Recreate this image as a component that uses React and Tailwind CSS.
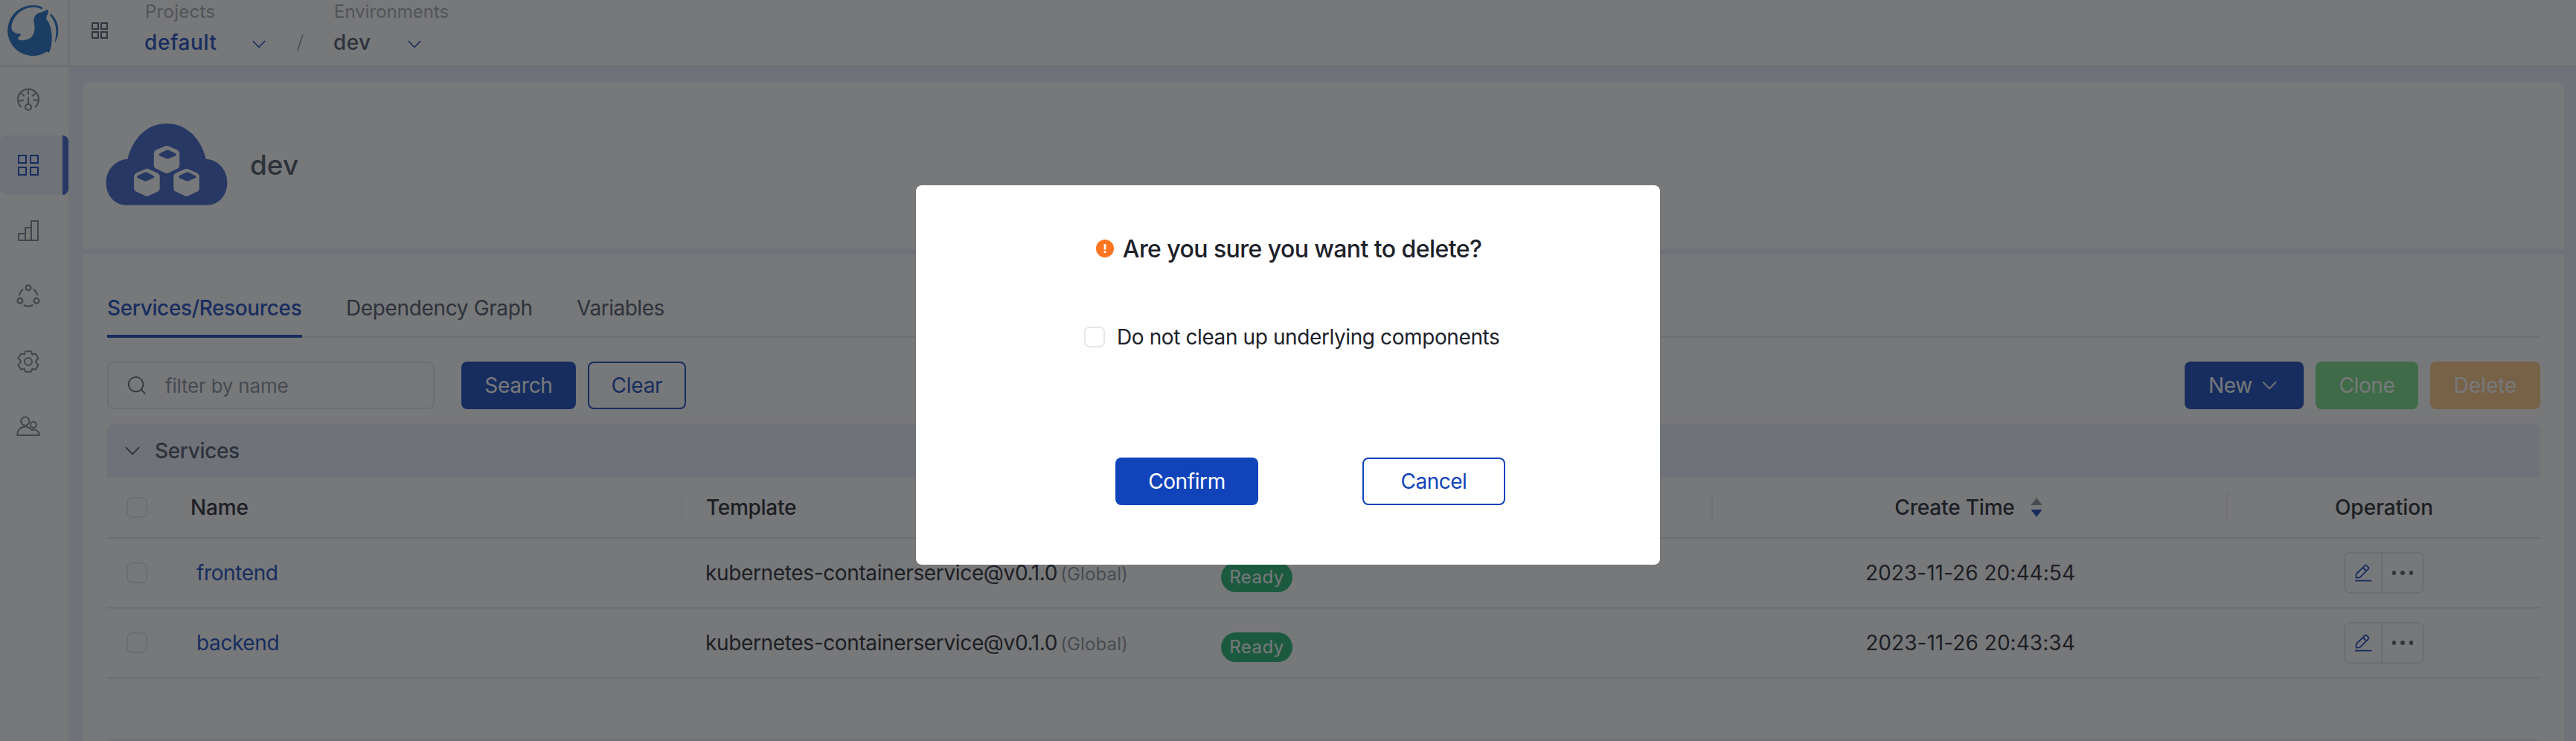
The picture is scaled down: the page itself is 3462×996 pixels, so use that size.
const SIDEBAR_ICONS = {
  dashboard: (
    <>
      <path d="M6.8 26.2A14 14 0 1 1 25.2 26.2" />
      <path d="M16 2.5V9M6.5 7.2l4.2 4.2M25.5 7.2l-4.2 4.2M3 18.4l7-1.9M22.5 16.5H30M16 12.5V22" />
      <circle cx="16" cy="26" r="4" />
    </>
  ),
  apps: (
    <g strokeWidth="2">
      <rect x="3" y="3" width="10" height="10" />
      <rect x="19" y="3" width="10" height="10" />
      <rect x="3" y="19" width="10" height="10" />
      <rect x="19" y="19" width="10" height="10" />
    </g>
  ),
  chart: (
    <path d="M3 29V20H12M12 29V12H20M20 29V3H29V29H3Z" strokeLinejoin="round" />
  ),
  share: (
    <g>
      <circle cx="16" cy="4.8" r="3.4" strokeWidth="2.2" />
      <circle cx="5" cy="22.3" r="3.4" strokeWidth="2.2" />
      <circle cx="27" cy="22.3" r="3.4" strokeWidth="2.2" />
      <path d="M3.6 15.2C4.6 11.6 6.2 9 9 6.8M28.6 15.2C27.6 11.6 25.8 9 23 6.8M9.8 28C13.6 30 18.4 30 22.2 28" />
    </g>
  ),
  settings: (
    <>
      <path
        strokeLinejoin="round"
        d="M12 2.2H20L21.2 6.4L25.8 5.4L29.6 11.8L26.6 14.4Q25.6 16 26.6 17.6L29.6 20.4L25.8 26.8L21.2 25.8L20 29.8H12L10.8 25.8L6.2 26.8L2.4 20.4L5.4 17.6Q6.4 16 5.4 14.4L2.4 11.6L6.2 5.4L10.8 6.4Z"
      />
      <circle cx="16" cy="16" r="5" />
    </>
  ),
  users: (
    <>
      <circle cx="11.8" cy="8.2" r="5.6" />
      <circle cx="23" cy="13" r="4" />
      <path
        strokeLinejoin="round"
        d="M1.2 27C1.2 20 6 15.6 11.8 15.6C15.4 15.6 18.4 17.2 20.4 20C25.6 18 30.8 21.6 30.8 27Z"
      />
    </>
  ),
};

const SIDEBAR = ["dashboard", "apps", "chart", "share", "settings", "users"];

function Logo() {
  return (
    <svg viewBox="0 0 288 288" className="size-24 shrink-0" fill="#196cc6">
      <path d="M172 29C158 23 146 21 132 21A102 102 0 1 0 189 208L196 213Q200 208 202 202C206 190 210 172 209 146C208 118 200 92 186 76C186 66 195 56 195 46Q193 38 188 39C178 46 170 49 160 51C143 57 136 68 136 84C138 94 141 104 139 121C136 140 130 154 108 160C94 164 82 163 73 158C70 154 74 150 80 146Q84 142 84 136C70 137 56 133 48 121C44 108 47 96 53 84C64 57 90 34 126 30C144 28 158 32 169 39Z" />
      <path d="M205 55C226 74 235 98 235 122C235 142 230 158 221 173C223 158 226 142 226 122C225 99 217 78 201 62Z" />
    </svg>
  );
}

function CloudIcon() {
  const cube =
    "M274 139Q282 135 290 139L325 154Q334 159 334 167V217Q334 225 326 229L290 246Q282 251 274 246L238 229Q230 225 230 217V167Q230 159 239 154Z";
  const face =
    "M280 155Q286 152 292 155L319 169Q324 173 319 177L294 188Q286 192 278 188L254 178Q248 173 254 168Z";
  return (
    <svg viewBox="36 47 492 331" className="mb-0.5 h-[110px] w-[164px] shrink-0">
      <path
        fill="#365fc5"
        d="M118 377C70 377 37 335 37 287C37 235 75 194 124 191C145 105 205 47 281 47C360 47 420 105 441 191C490 194 527 235 527 287C527 335 494 377 446 377Z"
      />
      <path fill="#fff" d={cube} />
      <path fill="#365fc5" d={face} />
      <g transform="translate(-80 93)">
        <path fill="#fff" d={cube} />
        <path fill="#365fc5" transform="translate(-9 -3)" d={face} />
      </g>
      <g transform="translate(80 93)">
        <path fill="#fff" d={cube} />
        <path fill="#365fc5" transform="translate(0 -3)" d={face} />
      </g>
    </svg>
  );
}

function Chevron({ className }) {
  return (
    <svg viewBox="0 0 20 12" className={className} fill="none" stroke="currentColor" strokeWidth="1.8">
      <path d="M1 1.2L10 10.4L19 1.2" />
    </svg>
  );
}

function Checkbox() {
  return <span className="block size-7 shrink-0 rounded-[7px] border-2 border-[#e5e6eb] bg-white" />;
}

function Sidebar() {
  return (
    <aside className="flex w-[94px] shrink-0 flex-col">
      <div className="h-[90px] overflow-hidden border-r-2 border-b-2 border-[#e5e6eb] bg-white">
        <Logo />
      </div>
      <nav className="mr-0.5 flex flex-1 flex-col gap-2 bg-white pt-1">
        {SIDEBAR.map((name) => (
          <div
            key={name}
            className={
              name === "apps"
                ? "flex h-20 items-center rounded-[8px] border-r-8 border-[#365fc5] bg-[#ecf0fb] pl-[22px] text-[#1144bb]"
                : "flex h-20 items-center pl-[22px] text-[#748290]"
            }
          >
            <svg viewBox="0 0 32 32" className="size-8" fill="none" stroke="currentColor" strokeWidth="2">
              {SIDEBAR_ICONS[name]}
            </svg>
          </div>
        ))}
      </nav>
    </aside>
  );
}

function Header() {
  return (
    <header className="flex h-[90px] items-start border-b-2 border-[#e5e6eb] bg-white">
      <svg
        viewBox="0 0 24 24"
        className="mt-[29px] ml-7 size-6 text-[#4e5969]"
        fill="none"
        stroke="currentColor"
        strokeWidth="2"
      >
        <rect x="2" y="2" width="8" height="8" />
        <rect x="14" y="2" width="8" height="8" />
        <rect x="2" y="14" width="8" height="8" />
        <rect x="14" y="14" width="8" height="8" />
      </svg>
      <div className="ml-12 w-[204px]">
        <div className="pl-[1px] text-2xl leading-[32px] tracking-[0.29px] text-[#a0a6b0]">Projects</div>
        <div className="flex h-[50px] items-center text-[#1144bb]">
          <span className="w-[145px] text-[28px] font-medium tracking-[0.57px]">default</span>
          <Chevron className="mt-1 h-[11px] w-[18px]" />
        </div>
      </div>
      <div className="flex h-[82px] w-[50px] items-end text-[#8a94a0]">
        <svg viewBox="0 0 10 24" className="mb-3 h-6 w-2.5" fill="none" stroke="currentColor" strokeWidth="1.6">
          <path d="M9 0.5L1.5 23" />
        </svg>
      </div>
      <div>
        <div className="pl-[1px] text-2xl leading-[32px] text-[#a0a6b0]">Environments</div>
        <div className="flex h-[50px] items-center">
          <span className="w-[100px] text-[28px] font-medium tracking-[0.39px] text-[#465262]">dev</span>
          <Chevron className="mt-1 h-[11px] w-[18px] text-[#1144bb]" />
        </div>
      </div>
    </header>
  );
}

function Tabs() {
  return (
    <div className="flex h-20 gap-[59px] border-b-2 border-[#e5e6eb] text-[28px] text-[#465262]">
      <div className="flex h-20 w-[262px] items-center border-y-4 border-t-transparent border-b-[#1144bb] font-medium tracking-[-0.37px] whitespace-nowrap text-[#1144bb]">
        Services/Resources
      </div>
      <div className="flex h-20 w-[251px] items-center tracking-[-0.36px] whitespace-nowrap">Dependency Graph</div>
      <div className="flex h-20 items-center tracking-[-0.48px]">Variables</div>
    </div>
  );
}

function Toolbar() {
  return (
    <div className="mt-8 flex h-16 text-[28px]">
      <div className="flex w-[440px] items-center rounded-[8px] border-2 border-[#e5e6eb] pl-[26px]">
        <svg
          viewBox="0 0 24 24"
          className="size-6 text-[#4e5969]"
          fill="none"
          stroke="currentColor"
          strokeWidth="1.7"
        >
          <circle cx="10.6" cy="10.6" r="9.8" />
          <path d="M17.8 17.8L23.4 23.4" />
        </svg>
        <span className="mt-px ml-[26px] text-[26px] tracking-[-0.21px] text-[#86909c]">filter by name</span>
      </div>
      <div className="ml-9 flex w-[154px] items-center justify-center rounded-[8px] bg-[#1144bb] tracking-[-0.27px] text-white">
        Search
      </div>
      <div className="ml-4 flex w-[132px] items-center justify-center rounded-[8px] border-2 border-[#1144bb] tracking-[-0.26px] text-[#1144bb]">
        Clear
      </div>
      <div className="ml-auto flex w-40 items-center rounded-[8px] bg-[#1144bb] pl-8 tracking-[-0.36px] text-white">
        <span className="w-[72px]">New</span>
        <Chevron className="h-3 w-5" />
      </div>
      <div className="ml-4 flex w-[138px] items-center justify-center rounded-[8px] bg-[#74df82] tracking-[-0.39px] text-white">
        Clone
      </div>
      <div className="ml-4 flex w-[148px] items-center justify-center rounded-[8px] bg-[#ffc67f] text-white">
        Delete
      </div>
    </div>
  );
}

function GroupBar({ title }) {
  return (
    <div className="flex h-[72px] shrink-0 items-center gap-5 rounded-t-[8px] bg-[#ecf0fb] pl-6 text-[28px] text-[#465262]">
      <Chevron className="h-3 w-5" />
      <span className="font-medium tracking-[-0.35px]">{title}</span>
    </div>
  );
}

const GRID = "grid grid-cols-[80px_693px_692px_693px_692px_420px] items-center border-b-2 border-[#e5e6eb]";

function TableHead() {
  return (
    <div className={GRID + " h-[82px] text-[28px] font-medium text-[#1d2129]"}>
      <div className="pl-[26px]">
        <Checkbox />
      </div>
      <div className="flex h-10 items-center border-r-2 border-[#eceef2] pl-8 tracking-[-0.15px]">Name</div>
      <div className="flex h-10 items-center border-r-2 border-[#eceef2] pl-8 tracking-[-0.28px]">Template</div>
      <div className="flex h-10 items-center border-r-2 border-[#eceef2] pl-8">Status</div>
      <div className="flex h-10 items-center justify-center gap-[21px] border-r-2 border-[#eceef2] pr-[3px]">
        <span className="tracking-[-0.18px]">Create Time</span>
        <svg viewBox="0 0 16 26" className="h-[26px] w-4">
          <path fill="#8a93a0" d="M8 0L15.6 10H0.4Z" />
          <path fill="#1144bb" d="M8 26L15.6 16H0.4Z" />
        </svg>
      </div>
      <div className="text-center">Operation</div>
    </div>
  );
}

function Row({ name, time, last }) {
  return (
    <div className={GRID + " h-[94px] text-[28px] text-[#1d2129]" + (last ? " rounded-b-[4px]" : "")}>
      <div className="pl-[26px]">
        <Checkbox />
      </div>
      <div className="pl-10 tracking-[-0.38px] text-[#1144bb]">{name}</div>
      <div className="flex items-baseline gap-1 pl-[31px]">
        <span className="tracking-[-0.36px]">kubernetes-containerservice@v0.1.0</span>
        <span className="text-2xl tracking-[0.13px] text-[#86909c]">(Global)</span>
      </div>
      <div className="pt-3 pl-8">
        <span className="flex h-10 w-24 items-center justify-center rounded-full bg-[#1db56f] text-2xl tracking-[0.5px] text-white">
          Ready
        </span>
      </div>
      <div className="text-center tracking-[0.05px]">{time}</div>
      <div className="flex justify-center">
        <div className="flex h-14 w-[108px] rounded-[8px] border-2 border-[#e5e6eb]">
          <div className="flex w-[50px] items-center border-r-2 border-[#e5e6eb] pl-3">
            <svg viewBox="0 0 24 24" className="size-6" fill="none" stroke="#1144bb" strokeWidth="1.8">
              <path
                strokeLinejoin="round"
                d="M14.4 2.2Q15.4 1.2 16.4 2.2L19 4.6Q19.9 5.6 19 6.6L8.2 17.6Q7.2 18.8 2.6 18.6Q2 14.4 3.2 13Z"
              />
              <path d="M11.8 5L16 9.2" />
              <path d="M1 22.6H23.4" />
            </svg>
          </div>
          <div className="flex flex-1 items-center justify-center gap-[6px]">
            <span className="size-[5.5px] rounded-full bg-[#4e5969]" />
            <span className="size-[5.5px] rounded-full bg-[#4e5969]" />
            <span className="size-[5.5px] rounded-full bg-[#4e5969]" />
          </div>
        </div>
      </div>
    </div>
  );
}

function ConfirmDialog() {
  return (
    <div className="fixed inset-0 z-10 flex items-start justify-center bg-[#1c1e22]/60 pt-[249px]">
      <div className="h-[510px] w-[1000px] rounded-[8px] bg-white pt-[66px] text-[28px] text-[#1d2129]">
        <div className="flex h-10 items-center justify-center gap-3 pl-[2px]">
          <svg viewBox="0 0 24 24" className="mb-0.5 size-6">
            <circle cx="12" cy="12" r="12" fill="#ff7420" />
            <path fill="#fff" d="M10.6 6h2.8v7.6h-2.8zM10.6 15.2h2.8V18h-2.8z" />
          </svg>
          <span className="text-[32px] font-medium tracking-[-0.57px]">Are you sure you want to delete?</span>
        </div>
        <div className="mt-[78px] flex h-10 items-center gap-4 pl-[226px]">
          <Checkbox />
          <span className="tracking-[-0.4px]">Do not clean up underlying components</span>
        </div>
        <div className="mt-[142px] flex h-16 gap-[140px] pl-[268px]">
          <div className="flex w-48 items-center justify-center rounded-[8px] bg-[#1144bb] tracking-[-0.4px] text-white">
            Confirm
          </div>
          <div className="flex w-48 items-center justify-center rounded-[8px] border-2 border-[#1144bb] tracking-[-0.51px] text-[#1144bb]">
            Cancel
          </div>
        </div>
      </div>
    </div>
  );
}

export default function App() {
  return (
    <div className="flex h-[996px] w-[3462px] overflow-hidden bg-[#ebeffb] font-['Inter','Liberation_Sans',sans-serif]">
      <Sidebar />
      <div className="flex flex-1 flex-col">
        <Header />
        <main className="flex flex-1 flex-col gap-2 pt-5 pr-4 pl-[18px]">
          <section className="flex h-56 shrink-0 items-center gap-[30px] rounded-t-[8px] bg-white pl-[30px]">
            <CloudIcon />
            <h1 className="text-[37px] font-medium text-[#465262]">dev</h1>
          </section>
          <section className="h-[654px] overflow-hidden bg-white px-8 pt-8">
            <Tabs />
            <Toolbar />
            <div className="mt-5">
              <GroupBar title="Services" />
              <TableHead />
              <Row name="frontend" time="2023-11-26 20:44:54" />
              <Row name="backend" time="2023-11-26 20:43:34" last />
            </div>
            <div className="mt-20 h-6 rounded-t-[8px] bg-[#ecf0fb]" />
          </section>
        </main>
      </div>
      <ConfirmDialog />
    </div>
  );
}
